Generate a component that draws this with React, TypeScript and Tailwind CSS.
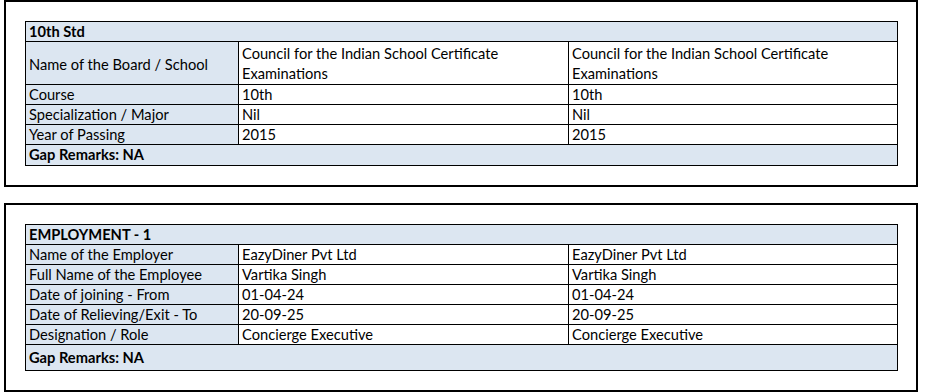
import React from 'react'

type Row = { label: string; a: string; b: string; tall?: boolean }

const education: Row[] = [
  {
    label: 'Name of the Board / School',
    a: 'Council for the Indian School Certificate Examinations',
    b: 'Council for the Indian School Certificate Examinations',
    tall: true,
  },
  { label: 'Course', a: '10th', b: '10th' },
  { label: 'Specialization / Major', a: 'Nil', b: 'Nil' },
  { label: 'Year of Passing', a: '2015', b: '2015' },
]

const employment: Row[] = [
  { label: 'Name of the Employer', a: 'EazyDiner Pvt Ltd', b: 'EazyDiner Pvt Ltd' },
  { label: 'Full Name of the Employee', a: 'Vartika Singh', b: 'Vartika Singh' },
  { label: 'Date of joining - From', a: '01-04-24', b: '01-04-24' },
  { label: 'Date of Relieving/Exit - To', a: '20-09-25', b: '20-09-25' },
  { label: 'Designation / Role', a: 'Concierge Executive', b: 'Concierge Executive' },
]

function Section({
  title,
  rows,
  gapHeight,
}: {
  title: string
  rows: Row[]
  gapHeight: string
}) {
  return (
    <div className="ml-[4px] w-[914px] border-2 border-black px-[19px] pt-[19px] pb-[19px]">
      <table className="w-[872px] table-fixed border-collapse text-[14.67px] text-black">
        <colgroup>
          <col className="w-[213px]" />
          <col className="w-[330px]" />
          <col className="w-[329px]" />
        </colgroup>
        <tbody>
          <tr>
            <td colSpan={3} className="h-[20px] border border-black bg-[#dce6f1] px-[3px] py-0 align-middle font-bold leading-[18px]">
              {title}
            </td>
          </tr>
          {rows.map((r) => (
            <tr key={r.label}>
              <td className={`${r.tall ? 'h-[43px] pt-[3px] pb-0' : 'h-[20px] py-0'} border border-black bg-[#dce6f1] px-[3px] align-middle leading-[18px]`}>
                {r.label}
              </td>
              <td className={`border border-black bg-white px-[3px] align-middle ${r.tall ? 'pt-[2px] pb-0 leading-[20px]' : 'py-0 leading-[18px]'}`}>{r.a}</td>
              <td className={`border border-black bg-white px-[3px] align-middle ${r.tall ? 'pt-[2px] pb-0 leading-[20px]' : 'py-0 leading-[18px]'}`}>{r.b}</td>
            </tr>
          ))}
          <tr>
            <td colSpan={3} className={`${gapHeight} border border-black bg-[#dce6f1] px-[3px] py-0 align-middle font-bold leading-[18px]`}>
              Gap Remarks: NA
            </td>
          </tr>
        </tbody>
      </table>
    </div>
  )
}

export default function App() {
  return (
    <div className="h-[392px] w-[925px] bg-white font-['Lato',sans-serif]">
      <Section title="10th Std" rows={education} gapHeight="h-[21px]" />
      <div className="h-[16px]" />
      <Section title="EMPLOYMENT - 1" rows={employment} gapHeight="h-[26px]" />
    </div>
  )
}
